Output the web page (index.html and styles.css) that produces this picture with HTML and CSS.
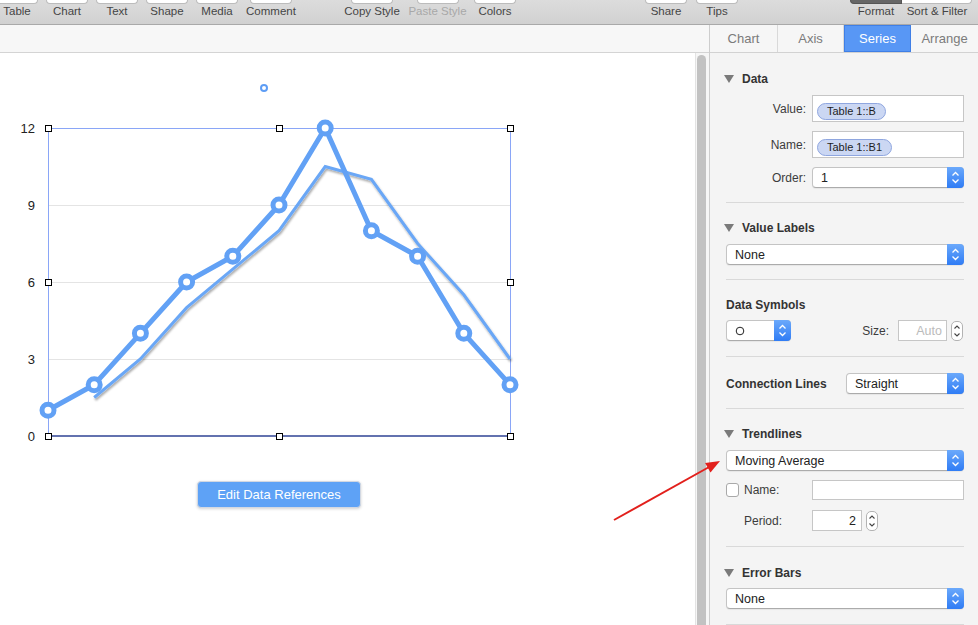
FILE: index.html
```html
<!DOCTYPE html>
<html lang="en">
<head>
<meta charset="utf-8">
<title>Numbers – Series inspector</title>
<link rel="stylesheet" href="styles.css">
</head>
<body>
<div class="app">
  <header class="toolbar">
    <div class="tb-group g1">
      <div class="tb-item"><span class="tb-btn"></span><span class="tb-label">Table</span></div>
      <div class="tb-item"><span class="tb-btn"></span><span class="tb-label">Chart</span></div>
      <div class="tb-item"><span class="tb-btn"></span><span class="tb-label">Text</span></div>
      <div class="tb-item"><span class="tb-btn"></span><span class="tb-label">Shape</span></div>
      <div class="tb-item"><span class="tb-btn"></span><span class="tb-label">Media</span></div>
      <div class="tb-item w58"><span class="tb-btn"></span><span class="tb-label">Comment</span></div>
    </div>
    <div class="tb-group g2">
      <div class="tb-item w66"><span class="tb-btn"></span><span class="tb-label">Copy Style</span></div>
      <div class="tb-item w65"><span class="tb-btn"></span><span class="tb-label disabled">Paste Style</span></div>
      <div class="tb-item"><span class="tb-btn"></span><span class="tb-label">Colors</span></div>
    </div>
    <div class="tb-group g3">
      <div class="tb-item"><span class="tb-btn"></span><span class="tb-label">Share</span></div>
      <div class="tb-item w52"><span class="tb-btn"></span><span class="tb-label">Tips</span></div>
    </div>
    <div class="tb-group g4">
      <div class="tb-item w52 seg-dark"><span class="tb-btn"></span><span class="tb-label">Format</span></div>
      <div class="tb-item w70 seg-light"><span class="tb-btn"></span><span class="tb-label">Sort &amp; Filter</span></div>
    </div>
  </header>

  <div class="main">
    <div class="doc">
      <div class="doc-top"></div>
      <div class="doc-body">
        <div class="canvas">
          <svg class="chart" width="695" height="420" viewBox="0 53 695 420" xmlns="http://www.w3.org/2000/svg">
            <defs>
              <filter id="shadow" x="-10%" y="-10%" width="120%" height="130%">
                <feDropShadow dx="1" dy="2" stdDeviation="1" flood-color="#000" flood-opacity="0.35"/>
              </filter>
            </defs>
            <!-- rotation handle -->
            <circle cx="264" cy="88" r="3" fill="#fff" stroke="#5e9df5" stroke-width="2"/>
            <!-- gridlines -->
            <g stroke="#e4e4e4" stroke-width="1">
              <line x1="48" y1="205.5" x2="510" y2="205.5"/>
              <line x1="48" y1="282.5" x2="510" y2="282.5"/>
              <line x1="48" y1="359.5" x2="510" y2="359.5"/>
            </g>
            <!-- selection frame -->
            <g stroke="#8aa6f7" stroke-width="1" fill="none">
              <line x1="48" y1="128.5" x2="510" y2="128.5"/>
              <line x1="48.5" y1="128" x2="48.5" y2="436"/>
              <line x1="510.5" y1="128" x2="510.5" y2="436"/>
            </g>
            <line x1="48" y1="436" x2="510" y2="436" stroke="#2f4394" stroke-width="1.5"/>
            <!-- axis labels -->
            <g font-family="Liberation Sans, Arial, sans-serif" font-size="13" fill="#222" text-anchor="end">
              <text x="35" y="133">12</text>
              <text x="35" y="210">9</text>
              <text x="35" y="287">6</text>
              <text x="35" y="364">3</text>
              <text x="35" y="441">0</text>
            </g>
            <!-- moving average trendline -->
            <polyline filter="url(#shadow)" fill="none" stroke="#6aa7f6" stroke-width="3" stroke-linejoin="miter"
              points="94.2,397.5 140.4,359 186.6,307.7 232.8,269.2 279,230.7 325.2,166.5 371.4,179.3 417.6,243.5 463.8,294.8 510,359"/>
            <!-- series -->
            <polyline fill="none" stroke="#62a1f5" stroke-width="5" stroke-linejoin="round"
              points="48,410.3 94.2,384.7 140.4,333.3 186.6,282 232.8,256.3 279,205 325.2,128 371.4,230.7 417.6,256.3 463.8,333.3 510,384.7"/>
            <g fill="#fff" stroke="#62a1f5" stroke-width="5">
              <circle cx="48" cy="410.3" r="6"/>
              <circle cx="94.2" cy="384.7" r="6"/>
              <circle cx="140.4" cy="333.3" r="6"/>
              <circle cx="186.6" cy="282" r="6"/>
              <circle cx="232.8" cy="256.3" r="6"/>
              <circle cx="279" cy="205" r="6"/>
              <circle cx="325.2" cy="128" r="6"/>
              <circle cx="371.4" cy="230.7" r="6"/>
              <circle cx="417.6" cy="256.3" r="6"/>
              <circle cx="463.8" cy="333.3" r="6"/>
              <circle cx="510" cy="384.7" r="6"/>
            </g>
            <!-- selection handles -->
            <g fill="#fff" stroke="#000" stroke-width="1">
              <rect x="45.5" y="125.5" width="6" height="6"/>
              <rect x="276.5" y="125.5" width="6" height="6"/>
              <rect x="507.5" y="125.5" width="6" height="6"/>
              <rect x="45.5" y="279.5" width="6" height="6"/>
              <rect x="507.5" y="279.5" width="6" height="6"/>
              <rect x="45.5" y="433.5" width="6" height="6"/>
              <rect x="276.5" y="433.5" width="6" height="6"/>
              <rect x="507.5" y="433.5" width="6" height="6"/>
            </g>
          </svg>
          <button class="edit-btn" type="button">Edit Data References</button>
        </div>
        <div class="vscroll"><div class="thumb"></div></div>
      </div>
    </div>

    <aside class="inspector">
      <nav class="tabs">
        <div class="tab t-chart">Chart</div>
        <div class="tab t-axis">Axis</div>
        <div class="tab t-series active">Series</div>
        <div class="tab t-arrange">Arrange</div>
      </nav>
      <div class="panel">
        <section class="sec s-data">
          <div class="sec-head"><span class="disc"></span>Data</div>
          <div class="form-grid">
            <span class="lbl">Value:</span>
            <div class="ref-field"><span class="token">Table 1::B</span></div>
            <span class="lbl">Name:</span>
            <div class="ref-field"><span class="token">Table 1::B1</span></div>
            <span class="lbl">Order:</span>
            <div class="select"><span class="sel-val">1</span><span class="sel-arrows"><svg width="17" height="19" viewBox="0 0 17 19"><path d="M5.5 7.5 L8.5 4.5 L11.5 7.5 M5.5 11.5 L8.5 14.5 L11.5 11.5" fill="none" stroke="#fff" stroke-width="1.3"/></svg></span></div>
          </div>
        </section>

        <section class="sec s-vlabels">
          <div class="sec-head"><span class="disc"></span>Value Labels</div>
          <div class="select mt8"><span class="sel-val">None</span><span class="sel-arrows"><svg width="17" height="19" viewBox="0 0 17 19"><path d="M5.5 7.5 L8.5 4.5 L11.5 7.5 M5.5 11.5 L8.5 14.5 L11.5 11.5" fill="none" stroke="#fff" stroke-width="1.3"/></svg></span></div>
        </section>

        <section class="sec s-symbols">
          <div class="sec-head plain">Data Symbols</div>
          <div class="row sym-row">
            <div class="select sym-select"><span class="sel-val"><svg class="sym-icon" width="10" height="10" viewBox="0 0 10 10"><circle cx="5" cy="5" r="3.8" fill="none" stroke="#222" stroke-width="1"/></svg></span><span class="sel-arrows"><svg width="17" height="19" viewBox="0 0 17 19"><path d="M5.5 7.5 L8.5 4.5 L11.5 7.5 M5.5 11.5 L8.5 14.5 L11.5 11.5" fill="none" stroke="#fff" stroke-width="1.3"/></svg></span></div>
            <span class="lbl size-lbl">Size:</span>
            <div class="input auto-input">Auto</div>
            <div class="stepper"><svg width="10" height="18" viewBox="0 0 10 18"><path d="M2.5 6.5 L5 4 L7.5 6.5 M2.5 11.5 L5 14 L7.5 11.5" fill="none" stroke="#444" stroke-width="1.1"/></svg></div>
          </div>
        </section>

        <section class="sec s-lines">
          <div class="row">
            <div class="sec-head plain">Connection Lines</div>
            <div class="select line-select"><span class="sel-val">Straight</span><span class="sel-arrows"><svg width="17" height="19" viewBox="0 0 17 19"><path d="M5.5 7.5 L8.5 4.5 L11.5 7.5 M5.5 11.5 L8.5 14.5 L11.5 11.5" fill="none" stroke="#fff" stroke-width="1.3"/></svg></span></div>
          </div>
        </section>

        <section class="sec s-trend">
          <div class="sec-head"><span class="disc"></span>Trendlines</div>
          <div class="select mt8"><span class="sel-val">Moving Average</span><span class="sel-arrows"><svg width="17" height="19" viewBox="0 0 17 19"><path d="M5.5 7.5 L8.5 4.5 L11.5 7.5 M5.5 11.5 L8.5 14.5 L11.5 11.5" fill="none" stroke="#fff" stroke-width="1.3"/></svg></span></div>
          <div class="row name-row">
            <span class="checkbox"></span>
            <span class="lbl">Name:</span>
            <div class="input name-input"></div>
          </div>
          <div class="row period-row">
            <span class="lbl period-lbl">Period:</span>
            <div class="input period-input">2</div>
            <div class="stepper"><svg width="10" height="18" viewBox="0 0 10 18"><path d="M2.5 6.5 L5 4 L7.5 6.5 M2.5 11.5 L5 14 L7.5 11.5" fill="none" stroke="#444" stroke-width="1.1"/></svg></div>
          </div>
        </section>

        <section class="sec s-error">
          <div class="sec-head"><span class="disc"></span>Error Bars</div>
          <div class="select mt7"><span class="sel-val">None</span><span class="sel-arrows"><svg width="17" height="19" viewBox="0 0 17 19"><path d="M5.5 7.5 L8.5 4.5 L11.5 7.5 M5.5 11.5 L8.5 14.5 L11.5 11.5" fill="none" stroke="#fff" stroke-width="1.3"/></svg></span></div>
        </section>
      </div>
    </aside>
  </div>

  <svg class="annotation" width="978" height="625" viewBox="0 0 978 625" xmlns="http://www.w3.org/2000/svg">
    <line x1="614" y1="520" x2="710" y2="466.5" stroke="#e2201c" stroke-width="2"/>
    <polygon points="720,461 710.5,472.6 705.1,463" fill="#e2201c"/>
  </svg>
</div>
</body>
</html>
```

FILE: styles.css
```css
* { box-sizing: border-box; }
html, body { margin: 0; padding: 0; }
body {
  font-family: "Liberation Sans", Arial, sans-serif;
  background: #fff;
  color: #333;
}
.app {
  position: relative;
  width: 978px;
  height: 625px;
  overflow: hidden;
  display: flex;
  flex-direction: column;
}

/* toolbar */
.toolbar {
  flex: none;
  height: 25px;
  display: flex;
  overflow: hidden;
  background: linear-gradient(#dcdcdc, #d1d1d1);
  border-bottom: 1px solid #a9a9a9;
}
.tb-group { display: flex; flex: none; }
.g1 { margin-left: -8px; }
.g2 { margin-left: 39px; }
.g3 { margin-left: 121px; }
.g4 { margin-left: 107px; }
.tb-item {
  width: 50px;
  flex: none;
  display: flex;
  flex-direction: column;
  align-items: center;
}
.w52 { width: 52px; }
.w58 { width: 58px; }
.w65 { width: 65px; }
.w66 { width: 66px; }
.w70 { width: 70px; }
.tb-btn {
  display: block;
  width: 42px;
  height: 4px;
  background: #fff;
  border: 1px solid #bcbcbc;
  border-top: 0;
  border-radius: 0 0 4px 4px;
}
.tb-label {
  font-size: 11.5px;
  line-height: 14px;
  color: #454545;
  white-space: nowrap;
}
.tb-label.disabled { color: #a8a8a8; }
.seg-dark .tb-btn {
  width: 100%;
  background: #666;
  border-color: #555;
  border-radius: 0 0 0 4px;
}
.seg-light .tb-btn {
  width: 100%;
  border-left: 0;
  border-radius: 0 0 4px 0;
}

/* main area */
.main {
  flex: 1;
  min-height: 0;
  display: flex;
}
.doc {
  width: 709px;
  flex: none;
  display: flex;
  flex-direction: column;
}
.doc-top {
  flex: none;
  height: 28px;
  background: #f7f7f7;
  border-bottom: 1px solid #d4d4d4;
}
.doc-body {
  flex: 1;
  min-height: 0;
  display: flex;
}
.canvas {
  flex: 1;
  background: #fff;
}
.chart { display: block; }
.edit-btn {
  display: block;
  margin: 8px 0 0 197px;
  width: 164px;
  height: 27px;
  padding: 0;
  font-family: "Liberation Sans", Arial, sans-serif;
  font-size: 13px;
  color: #fff;
  background: #5ea2f6;
  border: 1px solid #d2d8e2;
  border-radius: 4px;
  box-shadow: 0 1px 3px rgba(0, 0, 0, 0.18);
}
.vscroll {
  width: 14px;
  flex: none;
  background: #f6f6f6;
  border-left: 1px solid #e3e3e3;
  padding: 2px 0 0 1px;
}
.thumb {
  width: 9px;
  height: 100%;
  background: #c2c2c2;
  border-radius: 5px 5px 0 0;
}

/* inspector */
.inspector {
  width: 269px;
  flex: none;
  background: #f4f4f4;
  border-left: 1px solid #cdcdcd;
  display: flex;
  flex-direction: column;
}
.tabs {
  flex: none;
  height: 28px;
  display: flex;
  background: #f6f6f6;
  border-bottom: 1px solid #d2d2d2;
}
.tab {
  display: flex;
  align-items: center;
  justify-content: center;
  font-size: 13px;
  color: #7b7b7b;
  border-right: 1px solid #d9d9d9;
}
.t-chart { width: 68px; }
.t-axis { width: 66px; }
.t-series { width: 67px; }
.t-arrange { width: 67px; border-right: 0; }
.tab.active {
  background: #5897f5;
  color: #fff;
  border-right: 0;
  box-shadow: inset 0 0 0 1px #3f7fe6;
}
.panel {
  padding: 0 14px 0 16px;
}
.sec { border-bottom: 1px solid #d9d9d9; }
.s-data { padding: 18px 0 14px; }
.s-vlabels { padding: 17px 0 14px; }
.s-symbols { padding: 17px 0 15px; }
.s-lines { padding: 16px 0 14px; }
.s-trend { padding: 17px 0 15px; }
.s-error { padding: 18px 0 15px; }

.sec-head {
  display: flex;
  align-items: center;
  font-size: 12px;
  line-height: 16px;
  font-weight: bold;
  color: #333;
  white-space: nowrap;
}
.disc {
  width: 0;
  height: 0;
  border-left: 5px solid transparent;
  border-right: 5px solid transparent;
  border-top: 8px solid #7a7a7a;
  margin: 0 8px 0 -2px;
}
.mt7 { margin-top: 7px; }
.mt8 { margin-top: 8px; }

.lbl {
  font-size: 12px;
  color: #3c3c3c;
  white-space: nowrap;
}
.form-grid {
  margin-top: 8px;
  display: grid;
  grid-template-columns: 80px 1fr;
  grid-template-rows: 27px 27px 21px;
  column-gap: 6px;
  row-gap: 9px;
  align-items: center;
}
.form-grid .lbl { text-align: right; }
.ref-field {
  height: 100%;
  background: #fff;
  border: 1px solid #c6c6c6;
  padding: 5px 0 0 4px;
}
.token {
  display: inline-block;
  height: 17px;
  line-height: 15px;
  padding: 0 9px;
  font-size: 11px;
  color: #1e1e1e;
  background: #cbd7f3;
  border: 1px solid #8fa6df;
  border-radius: 9px;
}

.select {
  height: 21px;
  display: flex;
  align-items: stretch;
  background: #fff;
  border: 1px solid #c4c4c4;
  border-bottom-color: #ababab;
  border-radius: 4px;
  box-shadow: 0 1px 1px rgba(0, 0, 0, 0.06);
}
.sel-val {
  flex: 1;
  display: flex;
  align-items: center;
  padding-left: 8px;
  font-size: 12.5px;
  color: #222;
  white-space: nowrap;
}
.sel-arrows {
  width: 17px;
  flex: none;
  margin: -1px -1px -1px 0;
  display: flex;
  align-items: center;
  background: linear-gradient(#6ba9fb, #2f7cf5);
  border-radius: 0 4px 4px 0;
}
.sel-arrows svg { display: block; }

.row {
  display: flex;
  align-items: center;
}
.sym-row { margin-top: 7px; height: 21px; }
.sym-select { width: 65px; }
.sym-icon { display: block; }
.size-lbl { margin-left: auto; margin-right: 9px; }
.input {
  background: #fff;
  border: 1px solid #c6c6c6;
  font-size: 12.5px;
  color: #222;
  display: flex;
  align-items: center;
}
.auto-input {
  width: 49px;
  height: 21px;
  justify-content: flex-end;
  padding-right: 4px;
  color: #bbb;
}
.stepper {
  width: 12px;
  height: 20px;
  margin-left: 4px;
  flex: none;
  background: #fff;
  border: 1px solid #b3b3b3;
  border-radius: 5px;
  display: flex;
  align-items: center;
  justify-content: center;
}
.stepper svg { display: block; }
.sym-row .stepper { margin-right: 1px; }
.line-select { margin-left: auto; width: 118px; }

.name-row { margin-top: 9px; height: 20px; }
.checkbox {
  width: 13px;
  height: 14px;
  flex: none;
  background: #fff;
  border: 1px solid #a9a9a9;
  border-radius: 3px;
  margin-right: 5px;
}
.name-input { margin-left: auto; width: 152px; height: 20px; }
.period-row { margin-top: 10px; height: 21px; }
.period-lbl { width: 86px; padding-left: 18px; }
.period-input {
  width: 50px;
  height: 21px;
  justify-content: flex-end;
  padding-right: 5px;
}

/* annotation arrow over everything */
.annotation {
  position: absolute;
  left: 0;
  top: 0;
  pointer-events: none;
}
```
